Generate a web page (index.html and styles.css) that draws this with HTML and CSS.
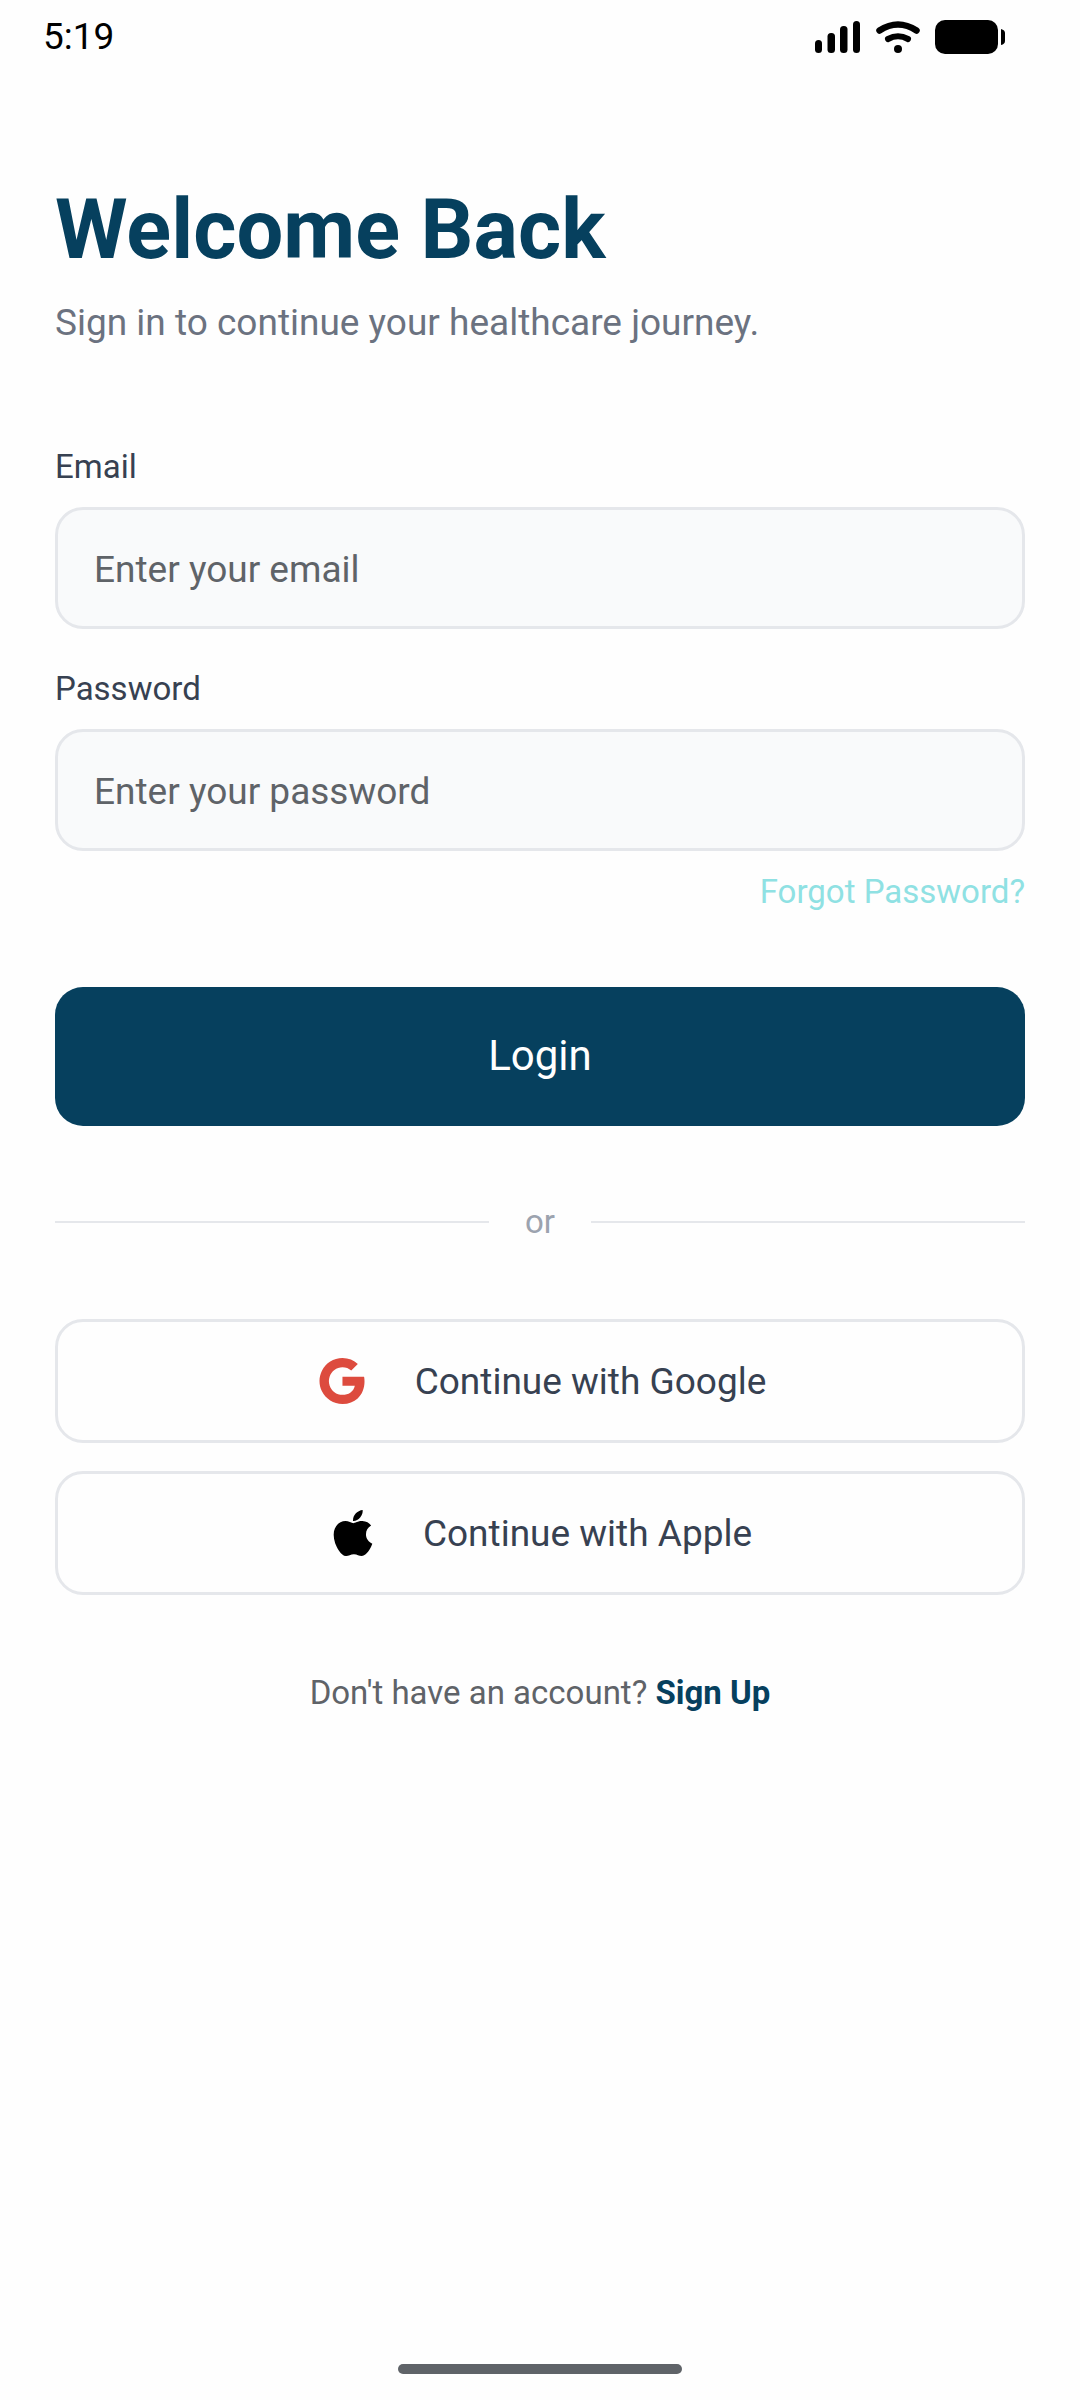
FILE: index.html
```html
<!DOCTYPE html>
<html lang="en">
<head>
    <meta charset="UTF-8">
    <meta name="viewport" content="width=device-width, initial-scale=1.0">
    <title>Welcome Back</title>
    <link rel="stylesheet" href="styles.css">
</head>
<body>

    <header class="status-bar">
        <span class="time">5:19</span>
        <div class="status-icons">
            <svg class="signal" viewBox="0 0 46 32" aria-hidden="true">
                <rect x="0" y="19" width="7" height="13" rx="3.5"/>
                <rect x="12.5" y="12" width="7.5" height="20" rx="3.5"/>
                <rect x="25" y="5" width="7.5" height="27" rx="3.5"/>
                <rect x="38" y="0" width="7" height="32" rx="3.5"/>
            </svg>
            <svg class="wifi" viewBox="0 0 44 32" aria-hidden="true">
                <path d="M3.5 9.5Q22 -2.5 40.5 9.5" fill="none" stroke="#000" stroke-width="6.5" stroke-linecap="round"/>
                <path d="M12 18Q22 12.5 32 18" fill="none" stroke="#000" stroke-width="6" stroke-linecap="round"/>
                <circle cx="22" cy="28" r="4"/>
            </svg>
            <svg class="battery" viewBox="0 0 70 34" aria-hidden="true">
                <rect x="0" y="0" width="63" height="34" rx="10"/>
                <path d="M66 9q4 1 4 4v8q0 3-4 4z"/>
            </svg>
        </div>
    </header>

    <main class="login">
        <h1>Welcome Back</h1>
        <p class="subtitle">Sign in to continue your healthcare journey.</p>

        <form class="login-form">
            <div class="field">
                <label for="email">Email</label>
                <input type="email" id="email" placeholder="Enter your email">
            </div>
            <div class="field">
                <label for="password">Password</label>
                <input type="password" id="password" placeholder="Enter your password">
            </div>
            <a class="forgot" href="#">Forgot Password?</a>
            <button type="submit" class="login-btn">Login</button>
        </form>

        <div class="divider">or</div>

        <div class="social">
            <button type="button" class="social-btn">
                <svg class="google" viewBox="136 128 752 768" aria-hidden="true">
                    <path d="M881 442.4H519.7v148.5h206.4c-8.9 48-35.9 88.6-76.6 115.8-34.4 23-78.3 36.6-129.9 36.6-99.9 0-184.4-67.5-214.6-158.2-7.6-23-12-47.6-12-72.9s4.4-49.9 12-72.9c30.3-90.6 114.8-158.1 214.7-158.1 56.3 0 106.8 19.4 146.6 57.4l110-110.1c-66.5-62-153.2-100-256.6-100-149.9 0-279.6 86-342.7 211.4-26 51.8-40.8 110.4-40.8 172.4S151 632.8 177 684.6C240.1 810 369.8 896 519.7 896c103.6 0 190.4-34.4 253.8-93 72.5-66.8 114.4-165.2 114.4-282.1 0-27.2-2.4-53.3-6.9-78.5z"/>
                </svg>
                Continue with Google
            </button>
            <button type="button" class="social-btn">
                <svg class="apple" viewBox="163 96 699 832" aria-hidden="true">
                    <path d="M747.4 535.7c-.4-68.2 30.5-119.6 92.9-157.5-34.9-50-87.7-77.5-157.3-82.8-65.9-5.2-138 38.4-164.4 38.4-27.9 0-91.7-36.6-141.9-36.6C273.1 298.8 163 379.8 163 544.6c0 48.7 8.9 99 26.7 150.8 23.8 68.2 109.6 235.3 199.1 232.6 46.8-1.1 79.9-33.2 140.8-33.2 59.1 0 89.7 33.2 141.9 33.2 90.3-1.3 167.9-153.2 190.5-221.6-121.1-57.1-114.6-167.2-114.6-170.7zm-105.1-305c50.7-60.2 46.1-115 44.6-134.7-44.8 2.6-96.6 30.5-126.1 64.8-32.5 36.8-51.6 82.3-47.5 133.6 48.4 3.7 92.6-21.2 129-63.7z"/>
                </svg>
                Continue with Apple
            </button>
        </div>

        <p class="signup">Don't have an account? <a href="#">Sign Up</a></p>
    </main>

    <div class="home-bar"></div>

</body>
</html>
```

FILE: styles.css
```css
* {
    box-sizing: border-box;
}

body {
    margin: 0;
    min-height: 100vh;
    display: flex;
    flex-direction: column;
    background-color: #fefefe;
    font-family: Roboto, sans-serif;
    color: #374151;
}

.status-bar {
    display: flex;
    align-items: center;
    justify-content: space-between;
    height: 73px;
    padding: 0 75px 0 43px;
    color: #000;
}

.time {
    font-size: 37px;
}

.status-icons {
    display: flex;
    align-items: center;
    gap: 15px;
}

.signal {
    width: 46px;
    height: 32px;
}

.wifi {
    width: 44px;
    height: 32px;
}

.battery {
    width: 70px;
    height: 34px;
}

.login {
    flex: 1;
    display: flex;
    flex-direction: column;
    padding: 107px 55px 0;
}

h1 {
    margin: 0;
    font-size: 83px;
    line-height: 100px;
    font-weight: bold;
    color: #06405e;
}

.subtitle {
    margin: 19px 0 0;
    font-size: 37px;
    line-height: 48px;
    color: #6b7280;
}

.login-form {
    display: flex;
    flex-direction: column;
    margin-top: 97px;
}

.field {
    display: flex;
    flex-direction: column;
    gap: 18px;
    margin-bottom: 37px;
}

.field label {
    font-size: 33px;
    line-height: 45px;
}

.field input {
    width: 100%;
    height: 122px;
    padding: 2px 36px 0;
    border: 3px solid #e5e7eb;
    border-radius: 28px;
    background-color: #f9fafb;
    font-family: inherit;
    font-size: 37px;
    color: #374151;
}

.field input::placeholder {
    color: #5f6368;
}

.forgot {
    align-self: flex-end;
    margin-top: -19px;
    font-size: 33px;
    line-height: 45px;
    color: #8fe1e3;
    text-decoration: none;
}

.login-btn {
    height: 139px;
    margin-top: 73px;
    padding-bottom: 4px;
    border: none;
    border-radius: 28px;
    background-color: #06405e;
    font-family: inherit;
    font-size: 42px;
    color: #fff;
}

.divider {
    display: flex;
    align-items: center;
    gap: 36px;
    margin-top: 73px;
    font-size: 33px;
    line-height: 45px;
    color: #9ca3af;
}

.divider::before,
.divider::after {
    content: "";
    flex: 1;
    height: 2px;
    background-color: #e5e7eb;
}

.social {
    display: flex;
    flex-direction: column;
    gap: 28px;
    margin-top: 75px;
}

.social-btn {
    display: flex;
    align-items: center;
    justify-content: center;
    gap: 50px;
    height: 124px;
    padding: 0 0 0 5px;
    border: 3px solid #e5e7eb;
    border-radius: 28px;
    background-color: transparent;
    font-family: inherit;
    font-size: 37px;
    color: #374151;
}

.google {
    width: 46px;
    height: 46px;
    fill: #dd4b3e;
}

.apple {
    width: 40px;
    height: 46px;
    fill: #000;
}

.signup {
    margin: 75px 0 0;
    text-align: center;
    font-size: 33px;
    line-height: 45px;
    color: #5f6368;
}

.signup a {
    font-weight: bold;
    color: #06405e;
    text-decoration: none;
}

.home-bar {
    align-self: center;
    width: 284px;
    height: 10px;
    margin-bottom: 26px;
    border-radius: 5px;
    background-color: #5f6368;
}
```
